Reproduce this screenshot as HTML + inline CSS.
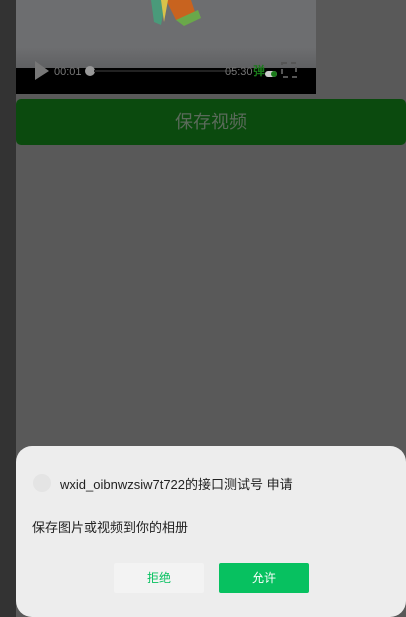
<!DOCTYPE html>
<html><head><meta charset="utf-8"><style>
html{overflow:hidden;height:617px}
body{margin:0;width:406px;height:617px;overflow:hidden;background:#595959;position:relative;font-family:"Liberation Sans","Noto Sans CJK SC",sans-serif}
.l{position:absolute;left:0;top:0;width:16px;height:617px;background:#333}
.v{position:absolute;left:16px;top:0;width:300px;height:68px;background:linear-gradient(#6d6e70 70%,#5f6062)}
.bar{position:absolute;left:16px;top:68px;width:300px;height:26px;background:#000}
.btn{position:absolute;left:16px;top:99px;width:390px;height:46px;background:#0b4a0e;border-radius:5px;color:#5a6a5a;font-size:18px;text-align:center;line-height:46px}
.d{position:absolute;left:16px;top:446px;width:390px;height:171px;background:#ededed;border-radius:16px;overflow:hidden}
</style></head><body>
<div class="l"></div>
<div class="v">
<svg width="300" height="68" style="position:absolute;left:0;top:0"><polygon points="135,0 150,0 145,25 138,22" fill="#4a9a7a"/><polygon points="150,0 175,0 180,15 160,20" fill="#c8631f"/><polygon points="160,20 182,10 185,18 168,26" fill="#6aa84a"/><polygon points="145,0 152,0 148,22" fill="#d9c24a"/></svg>
</div>
<div class="bar"></div>
<svg width="300" height="30" style="position:absolute;left:16px;top:57px">
<polygon points="19,4 33,14 19,23" fill="#777"/>
<text x="38" y="18" font-size="11" fill="#777" font-family="Liberation Sans">00:01</text>
<circle cx="74" cy="14" r="5" fill="#999"/>
<rect x="78" y="13" width="140" height="2" fill="#222"/>
<text x="209" y="18" font-size="11" fill="#777" font-family="Liberation Sans">05:30</text>
<text x="237" y="18" font-size="12" fill="#1a7a1a" font-weight="bold" font-family="Noto Sans CJK SC">弹</text>
<rect x="249" y="14" width="12" height="6" rx="3" fill="#ccc"/><circle cx="258" cy="17" r="3" fill="#1a7a1a"/>
<rect x="266" y="6" width="14" height="14" fill="none" stroke="#555" stroke-width="2" stroke-dasharray="5 4"/>
</svg>
<div class="btn">保存视频</div>
<div class="d">
<div style="position:absolute;left:17px;top:28px;width:18px;height:18px;border-radius:50%;background:#e4e4e4"></div>
<div style="position:absolute;left:44px;top:28px;font-size:13px;color:#222">wxid_oibnwzsiw7t722的接口测试号 申请</div>
<div style="position:absolute;left:16px;top:71px;font-size:13px;color:#222">保存图片或视频到你的相册</div>
<div style="position:absolute;left:98px;top:117px;width:90px;height:30px;background:#f3f3f3;border-radius:2px;color:#07c160;font-size:12px;text-align:center;line-height:30px">拒绝</div>
<div style="position:absolute;left:203px;top:117px;width:90px;height:30px;background:#07c160;border-radius:2px;color:#fff;font-size:12px;text-align:center;line-height:30px">允许</div>
</div>
</body></html>
